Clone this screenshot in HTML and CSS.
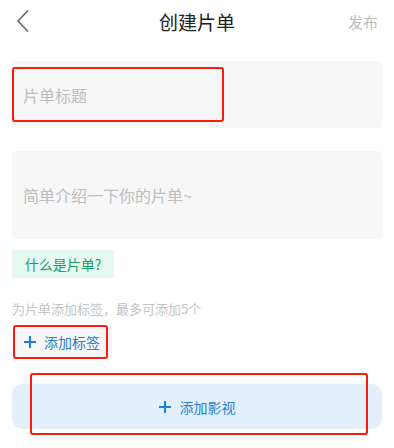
FILE: index.html
```html
<!DOCTYPE html>
<html lang="zh-CN">
<head>
  <meta charset="UTF-8">
  <meta name="viewport" content="width=device-width, initial-scale=1.0">
  <title>创建片单</title>
  <link rel="stylesheet" href="styles.css">
</head>
<body>
  <header class="topbar">
    <a class="back" href="#back">
      <svg width="14" height="24" viewBox="0 0 14 24"><path d="M12 1.5 L2 12 L12 22.5" fill="none" stroke="#666" stroke-width="1.6"/></svg>
    </a>
    <div class="page-title">创建片单</div>
    <a class="publish" href="#publish">发布</a>
  </header>

  <div class="content">
    <div class="field field-title">
      <span class="placeholder">片单标题</span>
      <div class="mark mark-title"></div>
    </div>

    <div class="field field-desc">
      <span class="placeholder">简单介绍一下你的片单~</span>
    </div>

    <div class="help-tag">什么是片单?</div>

    <p class="hint">为片单添加标签，最多可添加5个</p>

    <div class="tag-row">
      <button class="btn-tag">
        <svg width="12" height="12" viewBox="0 0 12 12"><path d="M6 0 V12 M0 6 H12" stroke="#1f7fd6" stroke-width="2"/></svg>
        添加标签
      </button>
      <div class="mark mark-tag"></div>
    </div>

    <div class="media-row">
      <button class="btn-media">
        <svg width="12" height="12" viewBox="0 0 12 12"><path d="M6 0 V12 M0 6 H12" stroke="#1f7fd6" stroke-width="2"/></svg>
        添加影视
      </button>
      <div class="mark mark-media"></div>
    </div>
  </div>
</body>
</html>
```

FILE: styles.css
```css
body {
  margin: 0;
  min-height: 448px;
  font-family: "Noto Sans CJK SC", "Noto Sans", sans-serif;
  background-color: #fff;
  color: #222;
}

.topbar {
  display: flex;
  align-items: center;
  justify-content: space-between;
  height: 42px;
  padding: 0 16px;
  position: relative;
}

.back {
  display: flex;
  align-items: center;
  width: 30px;
}

.page-title {
  position: absolute;
  left: 0;
  right: 0;
  text-align: center;
  font-size: 19px;
  color: #222;
  pointer-events: none;
}

.publish {
  font-size: 15px;
  color: #bbb;
  text-decoration: none;
}

.content {
  display: flex;
  flex-direction: column;
  align-items: flex-start;
  padding: 0 12px 18px 12px;
}

.field {
  position: relative;
  align-self: stretch;
  background-color: #f7f7f7;
  border-radius: 4px;
  display: flex;
  align-items: center;
  padding: 0 11px;
}

.field-title {
  margin-top: 19px;
  height: 67px;
}

.field-desc {
  margin-top: 23px;
  height: 88px;
}

.placeholder {
  font-size: 16px;
  color: #bdbdbd;
}

.help-tag {
  margin-top: 11px;
  height: 28px;
  width: 102px;
  display: flex;
  align-items: center;
  justify-content: center;
  background-color: #e7f8f1;
  color: #189d69;
  font-size: 14px;
}

.hint {
  margin: 22px 0 0 0;
  font-size: 13px;
  line-height: 18px;
  color: #c4c4c4;
}

.tag-row {
  position: relative;
  margin-top: 8px;
}

.btn-tag {
  display: flex;
  align-items: center;
  gap: 8px;
  height: 31px;
  padding: 0 12px 0 10px;
  margin-left: 2px;
  border: none;
  border-radius: 4px;
  background-color: #f6f6f6;
  color: #2a80cf;
  font-family: inherit;
  font-size: 14px;
}

.media-row {
  position: relative;
  align-self: stretch;
  margin-top: 27px;
}

.btn-media {
  width: 100%;
  height: 45px;
  display: flex;
  align-items: center;
  justify-content: center;
  gap: 9px;
  border: none;
  border-radius: 10px;
  background-color: #e3f0fb;
  color: #2a80cf;
  font-family: inherit;
  font-size: 14px;
}

/* red annotation frames */
.mark {
  position: absolute;
  border: 2px solid #ff1a10;
  border-radius: 3px;
  box-sizing: border-box;
  pointer-events: none;
}

.mark-title {
  left: 0;
  top: 6px;
  width: 212px;
  height: 55px;
}

.mark-tag {
  left: 1px;
  top: -1px;
  width: 95px;
  height: 34px;
}

.mark-media {
  left: 18px;
  top: -11px;
  width: 338px;
  height: 62px;
}
```
